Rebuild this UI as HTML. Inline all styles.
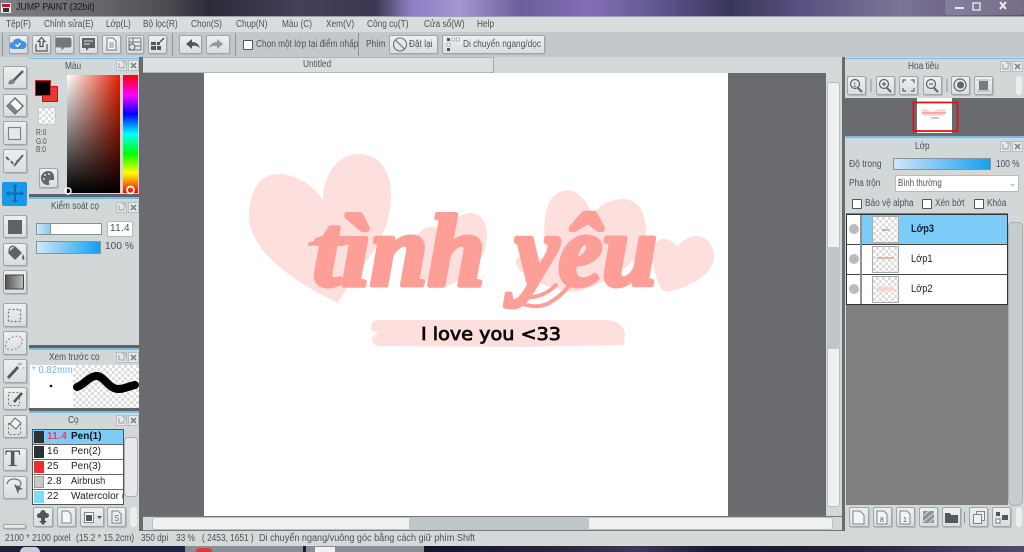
<!DOCTYPE html>
<html><head><meta charset="utf-8"><title>JUMP PAINT</title>
<style>
html,body{margin:0;padding:0;width:1024px;height:552px;overflow:hidden;background:#d4d9da}
body{position:relative;font-family:"Liberation Sans","DejaVu Sans",sans-serif;font-size:10px;color:#4c5154}
.r,.t,.b{position:absolute;box-sizing:border-box}
.t{white-space:nowrap;line-height:12px;transform:scaleX(.83);transform-origin:0 50%}
.t.n{transform:none}
.b{background:linear-gradient(#eef0f0,#d9dddf);border:1px solid #9fa6a9;border-radius:2px;box-shadow:1px 1px 0 #b4babc}
.ck{position:absolute;box-sizing:border-box;width:10px;height:10px;background:#fff;border:1px solid #555;border-radius:1px}
.chs{background:repeating-conic-gradient(#dedede 0 25%,#fff 0 50%) 0 0/6px 6px}
.grad{background:linear-gradient(90deg,#cfe7f8,#14a0ee);border:1px solid #8a9296}
svg{position:absolute;left:0;top:0}
</style></head><body>

<!-- title bar -->
<div class="r" style="left:0;top:0;width:1024px;height:16px;background:linear-gradient(90deg,#7d7f82 0,#66676b 100px,#4a4a50 170px,#2c2a38 210px,#45405a 300px,#3a3850 375px,#8d7cc0 410px,#a596d2 460px,#6d5d9c 520px,#8270b4 590px,#5f5590 660px,#39375a 730px,#595080 800px,#7d7598 900px,#59506c 1024px)"></div>
<div class="r" style="left:945px;top:0;width:79px;height:15px;background:rgba(215,215,235,.22);border-radius:0 0 3px 3px"></div>
<div class="t" style="left:16px;top:2px;color:#17171a;transform:scaleX(.88)">JUMP PAINT (32bit)</div>

<!-- menu -->
<div class="r" style="left:0;top:16px;width:1024px;height:16px;background:#d8dcdd;border-top:1px solid #9d9eb0"></div>
<div class="t" style="left:6px;top:19px">Tệp(F)</div>
<div class="t" style="left:44px;top:19px">Chỉnh sửa(E)</div>
<div class="t" style="left:106px;top:19px">Lớp(L)</div>
<div class="t" style="left:143px;top:19px">Bộ lọc(R)</div>
<div class="t" style="left:191px;top:19px">Chọn(S)</div>
<div class="t" style="left:236px;top:19px">Chụp(N)</div>
<div class="t" style="left:282px;top:19px">Màu (C)</div>
<div class="t" style="left:326px;top:19px">Xem(V)</div>
<div class="t" style="left:367px;top:19px">Công cụ(T)</div>
<div class="t" style="left:424px;top:19px">Cửa sổ(W)</div>
<div class="t" style="left:477px;top:19px">Help</div>

<!-- toolbar -->
<div class="r" style="left:0;top:32px;width:1024px;height:25px;background:#c3c9cb"></div>
<div class="r" style="left:2px;top:33px;width:1px;height:23px;background:#8f9698"></div>
<div class="r" style="left:172px;top:33px;width:1px;height:23px;background:#8f9698"></div>
<div class="r" style="left:235px;top:33px;width:1px;height:23px;background:#8f9698"></div>
<div class="r" style="left:358px;top:33px;width:1px;height:23px;background:#8f9698"></div>
<div class="b" style="left:9px;top:35px;width:19px;height:19px"></div>
<div class="b" style="left:32px;top:35px;width:19px;height:19px"></div>
<div class="b" style="left:55px;top:35px;width:19px;height:19px"></div>
<div class="b" style="left:79px;top:35px;width:19px;height:19px"></div>
<div class="b" style="left:102px;top:35px;width:19px;height:19px"></div>
<div class="b" style="left:126px;top:35px;width:18px;height:19px"></div>
<div class="b" style="left:148px;top:35px;width:19px;height:19px"></div>
<div class="b" style="left:179px;top:35px;width:23px;height:19px"></div>
<div class="b" style="left:206px;top:35px;width:24px;height:19px"></div>
<div class="ck" style="left:243px;top:40px"></div>
<div class="t" style="left:256px;top:39px">Chọn một lớp tại điểm nhấp</div>
<div class="t" style="left:366px;top:39px">Phím</div>
<div class="b" style="left:389px;top:35px;width:49px;height:19px"></div>
<div class="t" style="left:409px;top:39px">Đặt lại</div>
<div class="b" style="left:442px;top:35px;width:103px;height:19px"></div>
<div class="t" style="left:463px;top:39px">Di chuyển ngang/dọc</div>

<!-- tab row -->
<div class="r" style="left:143px;top:57px;width:699px;height:16px;background:#d3d8d9"></div>
<div class="r" style="left:143px;top:57px;width:351px;height:16px;background:#dbdfe0;border-right:1px solid #a5abae;border-top:1px solid #aeb4b6;border-bottom:1px solid #b0b6b8"></div>
<div class="t" style="left:303px;top:59px">Untitled</div>

<!-- canvas -->
<div class="r" style="left:143px;top:73px;width:683px;height:443px;background:#696b6e"></div>
<div class="r" style="left:204px;top:73px;width:524px;height:443px;background:#fff"></div>
<div class="r" style="left:826px;top:73px;width:16px;height:443px;background:#d3d8d9"></div>
<div class="r" style="left:827px;top:82px;width:13px;height:425px;background:#eff0f0;border:1px solid #b9bec0;border-radius:3px"></div>
<div class="r" style="left:827px;top:247px;width:13px;height:102px;background:#bfc6ca;border-radius:3px"></div>
<div class="r" style="left:143px;top:516px;width:699px;height:15px;background:#d3d8d9;border-top:1px solid #77797b;border-bottom:1px solid #77797b"></div>
<div class="r" style="left:152px;top:517px;width:681px;height:13px;background:#eff0f0;border:1px solid #b9bec0;border-radius:3px"></div>
<div class="r" style="left:409px;top:517px;width:180px;height:13px;background:#bfc6ca;border-radius:3px"></div>

<!-- side separators -->
<div class="r" style="left:139px;top:57px;width:4px;height:474px;background:#696b6e"></div>
<div class="r" style="left:842px;top:57px;width:3px;height:474px;background:#696b6e"></div>

<!-- left tools -->
<div class="r" style="left:0;top:57px;width:29px;height:474px;background:#d0d5d6"></div>
<div class="b" style="left:3px;top:66px;width:24px;height:23px"></div>
<div class="b" style="left:3px;top:94px;width:24px;height:23px"></div>
<div class="b" style="left:3px;top:121px;width:24px;height:24px"></div>
<div class="b" style="left:3px;top:149px;width:24px;height:24px"></div>
<div class="r" style="left:2px;top:182px;width:25px;height:24px;background:#1798ea;border-radius:2px"></div>
<div class="b" style="left:3px;top:215px;width:24px;height:23px"></div>
<div class="b" style="left:3px;top:243px;width:24px;height:23px"></div>
<div class="b" style="left:3px;top:270px;width:24px;height:24px"></div>
<div class="b" style="left:3px;top:303px;width:24px;height:24px"></div>
<div class="b" style="left:3px;top:331px;width:24px;height:24px"></div>
<div class="b" style="left:3px;top:359px;width:24px;height:24px"></div>
<div class="b" style="left:3px;top:387px;width:24px;height:23px"></div>
<div class="b" style="left:3px;top:415px;width:24px;height:23px"></div>
<div class="b" style="left:3px;top:448px;width:24px;height:23px"></div>
<div class="b" style="left:3px;top:476px;width:24px;height:23px"></div>
<div class="b" style="left:3px;top:524px;width:23px;height:5px"></div>
<div class="t n" style="left:5px;top:447px;font:bold 23px/24px 'Liberation Serif',serif;color:#55595c">T</div>

<!-- left panels -->
<div class="r" style="left:29px;top:57px;width:110px;height:474px;background:#d2d7d8"></div>
<div class="r" style="left:29px;top:58px;width:110px;height:1px;background:#74bfe4"></div>
<div class="t" style="left:65px;top:61px">Màu</div>
<div class="r" style="left:35px;top:80px;width:16px;height:16px;background:#000;border:1px solid #e01818;z-index:2"></div>
<div class="r" style="left:42px;top:86px;width:16px;height:16px;background:#e83a3a;border:1px solid #c01010"></div>
<div class="r chs" style="left:38px;top:107px;width:18px;height:18px;border:1px solid #c8c8c8"></div>
<div class="t" style="left:36px;top:129px;font-size:8px;line-height:8.5px;white-space:pre">R:0
G:0
B:0</div>
<div class="r" style="left:67px;top:75px;width:53px;height:118px;background:linear-gradient(transparent,#000),linear-gradient(90deg,#fff,#e62000)"></div>
<div class="r" style="left:123px;top:75px;width:15px;height:118px;background:linear-gradient(#f00,#f0f 17%,#00f 33%,#0ff 50%,#0f0 67%,#ff0 83%,#f00)"></div>
<div class="b" style="left:39px;top:168px;width:19px;height:20px"></div>
<div class="r" style="left:29px;top:194px;width:110px;height:3px;background:#5f6164"></div>
<div class="r" style="left:29px;top:197px;width:110px;height:2px;background:#74bfe4"></div>

<div class="t" style="left:51px;top:201px">Kiểm soát cọ</div>
<div class="r" style="left:36px;top:223px;width:66px;height:12px;background:#fff;border:1px solid #8a9296"></div>
<div class="r" style="left:37px;top:224px;width:14px;height:10px;background:linear-gradient(90deg,#d0e8f8,#8cc8ef);border-right:1px solid #8a9296"></div>
<div class="r" style="left:107px;top:221px;width:26px;height:16px;background:#fff;border:1px solid #b5babc;border-radius:2px"></div>
<div class="t n" style="left:110px;top:223px;letter-spacing:.3px">11.4</div>
<div class="r grad" style="left:36px;top:241px;width:65px;height:13px"></div>
<div class="t n" style="left:105px;top:241px;letter-spacing:.1px">100 %</div>
<div class="r" style="left:29px;top:345px;width:110px;height:3px;background:#5f6164"></div>
<div class="r" style="left:29px;top:348px;width:110px;height:2px;background:#74bfe4"></div>

<div class="t" style="left:49px;top:352px">Xem trước cọ</div>
<div class="r chs" style="left:73px;top:365px;width:66px;height:43px"></div>
<div class="r" style="left:30px;top:365px;width:43px;height:43px;background:#fff"></div>
<div class="t" style="left:32px;top:365px;color:#68b4de;letter-spacing:.2px;transform:scaleX(.92)">* 0.82mm</div>
<div class="r" style="left:29px;top:408px;width:110px;height:3px;background:#5f6164"></div>
<div class="r" style="left:29px;top:411px;width:110px;height:2px;background:#74bfe4"></div>

<div class="t" style="left:68px;top:415px">Cọ</div>
<div class="r" style="left:32px;top:429px;width:92px;height:76px;background:#fff;border:1px solid #555"></div>
<div class="r" style="left:33px;top:430px;width:90px;height:14px;background:#7dcbf7"></div>
<div class="r" style="left:33px;top:444px;width:90px;height:1px;background:#666"></div>
<div class="r" style="left:33px;top:459px;width:90px;height:1px;background:#666"></div>
<div class="r" style="left:33px;top:474px;width:90px;height:1px;background:#666"></div>
<div class="r" style="left:33px;top:489px;width:90px;height:1px;background:#666"></div>
<div class="r" style="left:34px;top:431px;width:10px;height:12px;background:#2e3133"></div>
<div class="r" style="left:34px;top:446px;width:10px;height:12px;background:#2e3133"></div>
<div class="r" style="left:34px;top:461px;width:10px;height:12px;background:#ee2e2e"></div>
<div class="r" style="left:34px;top:476px;width:10px;height:12px;background:#c9c9c9;border:1px solid #999"></div>
<div class="r" style="left:34px;top:491px;width:10px;height:12px;background:#7fdcf8"></div>
<div class="t n" style="left:47px;top:431px;font-weight:bold;color:#e8405e;letter-spacing:.3px">11.4</div>
<div class="t n" style="left:71px;top:431px;font-weight:bold;color:#111">Pen(1)</div>
<div class="t n" style="left:47px;top:446px;color:#222;letter-spacing:.3px">16</div>
<div class="t n" style="left:71px;top:446px;color:#222">Pen(2)</div>
<div class="t n" style="left:47px;top:461px;color:#222;letter-spacing:.3px">25</div>
<div class="t n" style="left:71px;top:461px;color:#222">Pen(3)</div>
<div class="t n" style="left:47px;top:476px;color:#222;letter-spacing:.3px">2.8</div>
<div class="t" style="left:71px;top:476px;color:#222;transform:scaleX(.92)">Airbrush</div>
<div class="r" style="left:71px;top:491px;width:52px;height:13px;overflow:hidden"><div class="t n" style="left:0;top:0;color:#222">Watercolor (1)</div></div>
<div class="t n" style="left:47px;top:491px;color:#222;letter-spacing:.3px">22</div>
<div class="r" style="left:124px;top:437px;width:14px;height:60px;background:#e6e8e9;border:1px solid #a9afb2;border-radius:4px"></div>
<div class="b" style="left:33px;top:507px;width:20px;height:20px"></div>
<div class="b" style="left:57px;top:507px;width:19px;height:20px"></div>
<div class="b" style="left:80px;top:507px;width:24px;height:20px"></div>
<div class="b" style="left:107px;top:507px;width:19px;height:20px"></div>
<div class="r" style="left:130px;top:507px;width:7px;height:20px;background:#eceeee;border-radius:3px"></div>

<!-- right panels -->
<div class="r" style="left:845px;top:57px;width:179px;height:474px;background:#d2d7d8"></div>
<div class="r" style="left:845px;top:58px;width:179px;height:1px;background:#74bfe4"></div>
<div class="t" style="left:908px;top:61px">Hoa tiêu</div>
<div class="b" style="left:847px;top:76px;width:19px;height:19px"></div>
<div class="b" style="left:876px;top:76px;width:19px;height:19px"></div>
<div class="b" style="left:899px;top:76px;width:19px;height:19px"></div>
<div class="b" style="left:923px;top:76px;width:19px;height:19px"></div>
<div class="b" style="left:951px;top:76px;width:19px;height:19px"></div>
<div class="b" style="left:974px;top:76px;width:19px;height:19px"></div>
<div class="r" style="left:1016px;top:76px;width:6px;height:19px;background:#eceeee;border-radius:3px"></div>
<div class="r" style="left:845px;top:98px;width:179px;height:38px;background:#696b6e"></div>
<div class="r" style="left:917px;top:98px;width:35px;height:35px;background:#fff"></div>
<div class="r" style="left:845px;top:136px;width:179px;height:2px;background:#74bfe4"></div>
<div class="t" style="left:915px;top:141px">Lớp</div>
<div class="t" style="left:849px;top:159px;transform:scaleX(.85)">Độ trong</div>
<div class="r grad" style="left:893px;top:158px;width:98px;height:12px"></div>
<div class="t" style="left:996px;top:159px">100 %</div>
<div class="t" style="left:849px;top:178px">Pha trộn</div>
<div class="r" style="left:895px;top:175px;width:124px;height:17px;background:#fff;border:1px solid #b5babc;border-radius:2px"></div>
<div class="t" style="left:898px;top:178px;transform:scaleX(.78)">Bình thường</div>
<div class="ck" style="left:852px;top:199px"></div>
<div class="t" style="left:865px;top:198px">Bảo vệ alpha</div>
<div class="ck" style="left:922px;top:199px"></div>
<div class="t" style="left:935px;top:198px">Xén bớt</div>
<div class="ck" style="left:974px;top:199px"></div>
<div class="t" style="left:987px;top:198px">Khóa</div>
<div class="r" style="left:846px;top:213px;width:162px;height:292px;background:#7f7f7f"></div>
<div class="r" style="left:846px;top:214px;width:162px;height:91px;background:#fff;border:1px solid #333"></div>
<div class="r" style="left:861px;top:215px;width:146px;height:29px;background:#7dcbf7"></div>
<div class="r" style="left:847px;top:244px;width:160px;height:1px;background:#444"></div>
<div class="r" style="left:847px;top:274px;width:160px;height:1px;background:#444"></div>
<div class="r" style="left:860px;top:215px;width:2px;height:89px;background:#8c9295"></div>
<div class="r" style="left:849px;top:224px;width:10px;height:10px;border-radius:50%;background:#b9bcbd"></div>
<div class="r" style="left:849px;top:254px;width:10px;height:10px;border-radius:50%;background:#b9bcbd"></div>
<div class="r" style="left:849px;top:284px;width:10px;height:10px;border-radius:50%;background:#b9bcbd"></div>
<div class="r chs" style="left:872px;top:216px;width:27px;height:27px;border:1px solid #aaa"></div>
<div class="r chs" style="left:872px;top:246px;width:27px;height:27px;border:1px solid #aaa"></div>
<div class="r chs" style="left:872px;top:276px;width:27px;height:27px;border:1px solid #aaa"></div>
<div class="t" style="left:911px;top:223px;font-size:11px;font-weight:bold;color:#10233a;transform:scaleX(.84)">Lớp3</div>
<div class="t" style="left:911px;top:253px;font-size:11px;color:#222;transform:scaleX(.84)">Lớp1</div>
<div class="t" style="left:911px;top:283px;font-size:11px;color:#222;transform:scaleX(.84)">Lớp2</div>
<div class="r" style="left:1008px;top:222px;width:15px;height:284px;background:#c6cbcd;border:1px solid #aab0b2;border-radius:4px 4px 6px 6px"></div>
<div class="b" style="left:849px;top:507px;width:20px;height:20px"></div>
<div class="b" style="left:873px;top:507px;width:19px;height:20px"></div>
<div class="b" style="left:896px;top:507px;width:19px;height:20px"></div>
<div class="b" style="left:919px;top:507px;width:19px;height:20px"></div>
<div class="b" style="left:942px;top:507px;width:19px;height:20px"></div>
<div class="r" style="left:964px;top:512px;width:1px;height:11px;background:#8f9698"></div>
<div class="b" style="left:969px;top:507px;width:19px;height:20px"></div>
<div class="b" style="left:992px;top:507px;width:19px;height:20px"></div>
<div class="r" style="left:1016px;top:507px;width:6px;height:20px;background:#eceeee;border-radius:3px"></div>

<!-- status -->
<div class="r" style="left:0;top:531px;width:1024px;height:15px;background:#d4d9da"></div>
<div class="t" style="left:5px;top:533px;transform:scaleX(.85)">2100 * 2100 pixel</div>
<div class="t" style="left:76px;top:533px;transform:scaleX(.85)">(15.2 * 15.2cm)</div>
<div class="t" style="left:141px;top:533px">350 dpi</div>
<div class="t" style="left:176px;top:533px">33 %</div>
<div class="t" style="left:202px;top:533px">( 2453, 1651 )</div>
<div class="t" style="left:259px;top:533px;transform:scaleX(.908)">Di chuyển ngang/vuông góc bằng cách giữ phím Shift</div>

<!-- taskbar -->
<div class="r" style="left:0;top:546px;width:1024px;height:6px;background:linear-gradient(90deg,#1c2038 0,#1e2244 180px,#14142c 430px,#2a2440 560px,#3c3658 640px,#181830 720px,#241f3c 850px,#524a70 1024px)"></div>
<div class="r" style="left:185px;top:546px;width:118px;height:6px;background:#8c8c94"></div>
<div class="r" style="left:306px;top:546px;width:118px;height:6px;background:#8c8c94"></div>
<div class="r" style="left:196px;top:548px;width:16px;height:4px;background:#d83a3a;border-radius:8px 8px 0 0"></div>
<div class="r" style="left:315px;top:547px;width:20px;height:5px;background:#f2f2f2"></div>
<div class="r" style="left:20px;top:547px;width:20px;height:5px;background:#c9ced6;border-radius:8px 8px 0 0"></div>

<!-- vector overlay -->
<svg width="1024" height="552" viewBox="0 0 1024 552">
<!-- app icon -->
<rect x="1" y="3" width="10" height="10" fill="#e8e8e8"/><rect x="2" y="4" width="8" height="3" fill="#c01820"/><rect x="3" y="8" width="6" height="4" fill="#333"/>
<!-- window controls -->
<rect x="955" y="7" width="9" height="2" fill="#e8e8f0"/>
<rect x="973" y="3" width="7" height="7" fill="none" stroke="#eee" stroke-width="1.3"/>
<path d="M1000 2l6 7M1006 2l-6 7" stroke="#eee" stroke-width="2"/>

<!-- toolbar icons -->
<path d="M13 49a3.500 3.500 0 0 1 0-7 5 5 0 0 1 9-1 4 4 0 0 1 1 8z" fill="#3f94dc"/><path d="M15.500 44.500l2 2 3-3.500" fill="none" stroke="#fff" stroke-width="1.400"/>
<path d="M41.500 37.500l-3.500 4h2v5h3v-5h2zM36 44v7h11v-7" fill="none" stroke="#555" stroke-width="1.200"/>
<path d="M58 38h12q2 0 2 2v6q0 2-2 2h-5l-3 3v-3h-4q-2 0-2-2v-6q0-2 2-2z" transform="translate(-.5 -.500)" fill="#74787a"/>
<path d="M82 38h13v10h-6l-3 3v-3h-4z" fill="#5e6265"/><path d="M84 41h9M84 44h6" stroke="#ddd"/>
<path d="M107 38h6l3 3v9h-9z" fill="#f6f6f6" stroke="#777"/><path d="M109 43h5M109 45h5M109 47h5" stroke="#888"/>
<path d="M129 38h12v12h-12zM129 42h12M129 46h12M133 38v12" fill="none" stroke="#70767a"/><circle cx="132" cy="47" r="3" fill="#ddd" stroke="#666"/>
<path d="M151 42h5v3h-5zM157 42h3v3h-3zM151 46h5v4h-5zM157 46h4v4h-4z" fill="#555"/><path d="M160 42l4-4" stroke="#555" stroke-width="1.500"/>
<path d="M186 44l6-5v3q6 0 8 6-3-3-8-2v3z" fill="#555"/>
<path d="M223 44l-6-5v3q-6 0-8 6 3-3 8-2v3z" fill="#93989b"/>
<circle cx="400" cy="44.500" r="6.500" fill="none" stroke="#6b7073" stroke-width="1.100"/><path d="M395.500 40l9 9" stroke="#6b7073" stroke-width="1.100"/>
<path d="M447 38h3v3h-3zM447 48h3v3h-3z" fill="#555"/><path d="M452 38h3v3h-3zM456.500 38h3v3h-3zM447 43h3v3h-3z" fill="#fff" stroke="#888" stroke-width=".6"/>

<!-- panel title icons -->
<g fill="#e6e9ea" stroke="#b8bdbf"><rect x="116.500" y="60.500" width="10" height="10"/><rect x="128.500" y="60.500" width="10" height="10"/><rect x="116.500" y="202.500" width="10" height="10"/><rect x="128.500" y="202.500" width="10" height="10"/><rect x="116.500" y="352.500" width="10" height="10"/><rect x="128.500" y="352.500" width="10" height="10"/><rect x="116.500" y="415.500" width="10" height="10"/><rect x="128.500" y="415.500" width="10" height="10"/>
<rect x="1000.500" y="61.500" width="10" height="10"/><rect x="1012.500" y="61.500" width="10" height="10"/><rect x="1000.500" y="141.500" width="10" height="10"/><rect x="1012.500" y="141.500" width="10" height="10"/></g>
<g stroke="#808487" stroke-width="1.600"><path d="M131 63l5 5M136 63l-5 5M131 205l5 5M136 205l-5 5M131 355l5 5M136 355l-5 5M131 418l5 5M136 418l-5 5M1015 64l5 5M1020 64l-5 5M1015 144l5 5M1020 144l-5 5"/></g>
<g fill="none" stroke="#9a9fa2"><path d="M119 63v5h5v-3M122 62h3v3M119 205v5h5v-3M122 204h3v3M119 355v5h5v-3M122 354h3v3M119 418v5h5v-3M122 417h3v3M1003 64v5h5v-3M1006 63h3v3M1003 144v5h5v-3M1006 143h3v3"/></g>

<!-- left tool icons -->
<path d="M23 71L13 81" stroke="#5a5e61" stroke-width="2.500"/><path d="M8 84q1-5 5-4.500l2 2q-1 4-7 2.500z" fill="#808487"/>
<path d="M15 98l8 8-8 8-8-8z" fill="#fff" stroke="#5f6366" stroke-width="1.300"/><path d="M10 103l-3 3 8 8 3-3z" fill="#808487"/>
<rect x="8.500" y="127.500" width="12" height="12" fill="#e6e8e9" stroke="#808487" stroke-width="1.200"/>
<path d="M6 157l3 3M11 161l2 3M17 162l1-2" stroke="#5f6366" stroke-width="2"/><path d="M14 166l9-11" stroke="#5f6366" stroke-width="2"/>
<path d="M15 185v17M6.500 193.500h17" stroke="#0e6cb0" stroke-width="2"/><path d="M15 184l-3 3h6zM15 203l-3-3h6zM6 193.500l3-3v6zM24 193.500l-3-3v6z" fill="#0e6cb0"/>
<rect x="8" y="220" width="14" height="14" fill="#5f6366"/>
<path d="M8 253l7-7 7 7-6 6q-1 1-2 0z" fill="#5f6366"/><path d="M9 252q0-6 5-6" fill="none" stroke="#5f6366" stroke-width="1.300"/><path d="M23 254q2 4 1 6-2 0-2-3z" fill="#5f6366"/>
<defs><linearGradient id="g1" x1="0" x2="1"><stop offset="0" stop-color="#555"/><stop offset="1" stop-color="#bbb"/></linearGradient></defs>
<rect x="5.500" y="275" width="18" height="14" fill="url(#g1)" stroke="#444"/>
<rect x="8.500" y="309.500" width="12" height="12" fill="none" stroke="#70757a" stroke-width="1.300" stroke-dasharray="2 2"/>
<ellipse cx="14" cy="343" rx="9" ry="6" transform="rotate(-28 14 343)" fill="none" stroke="#999" stroke-width="1.300" stroke-dasharray="2 2"/>
<path d="M8 378l10-11" stroke="#55595c" stroke-width="3"/><path d="M20 362v4M17 364h6M22 368h3" stroke="#aaa"/>
<rect x="8.500" y="392.500" width="11" height="13" fill="none" stroke="#70757a" stroke-dasharray="2 2"/><path d="M14 402l8-9" stroke="#555" stroke-width="2.500"/>
<rect x="8.500" y="423.500" width="12" height="11" fill="none" stroke="#70757a" stroke-dasharray="2 2"/><path d="M15 418l6 5-5 6-6-5z" fill="#f4f4f4" stroke="#666"/>
<path d="M7 484q1-5 7-5t7 4q0 4-5 4" fill="none" stroke="#777" stroke-width="1.200"/><path d="M14 484l9 5-4 1-1 4z" fill="#5f6366"/>

<!-- colour panel small -->
<circle cx="68" cy="191" r="3" fill="none" stroke="#fff" stroke-width="1.500"/>
<circle cx="130.500" cy="190" r="3.500" fill="none" stroke="#fff" stroke-width="1.800"/>
<path d="M48 171a7 7 0 1 0 0 14q2 0 1-2-1-3 2-3h3q1-9-6-9z" fill="#60666a"/><circle cx="45" cy="175" r="1" fill="#ddd"/><circle cx="49" cy="174" r="1" fill="#ddd"/><circle cx="44" cy="179" r="1" fill="#ddd"/>

<!-- brush preview -->
<circle cx="51" cy="386" r="1.300" fill="#111"/>
<path d="M77 387c8-3 12-11 20-11 7 0 12 13 21 13 7 0 11-3 17-4" fill="none" stroke="#000" stroke-width="8" stroke-linecap="round"/>

<!-- brush buttons -->
<path d="M37 516q0-3 3-3 1-3 3-3t3 3q3 0 3 3-1 2-3 2h-6q-3 0-3-2zM41 518h4v3h2l-4 4-4-4h2z" fill="#555"/>
<path d="M62 511h6l3 3v9h-9z" fill="#f6f6f6" stroke="#808487"/>
<rect x="84.500" y="512.500" width="9" height="10" fill="#fff" stroke="#808487"/><rect x="86" y="515" width="6" height="6" fill="#555"/><path d="M97 516h5l-2.500 3z" fill="#555"/>
<path d="M112 511h6l3 3v9h-9z" fill="#efefef" stroke="#808487"/><text x="114" y="521" font-family="Liberation Sans" font-size="8" fill="#666">S</text>

<!-- navigator icons -->
<g fill="none" stroke="#5f6366" stroke-width="1.200">
<circle cx="855" cy="84" r="4.500"/><path d="M858 88l4 4" stroke-width="2"/>
<circle cx="884" cy="84" r="4.500"/><path d="M887 88l4 4" stroke-width="2"/><path d="M882 84h4M884 82v4"/>
<path d="M903 83v-3h3M914 83v-3h-3M903 88v3h3M914 88v3h-3"/>
<circle cx="931" cy="84" r="4.500"/><path d="M934 88l4 4" stroke-width="2"/><path d="M929 84h4"/>
<circle cx="960" cy="85" r="6"/></g>
<text x="853" y="87" font-family="Liberation Sans" font-size="6.500" fill="#555">1</text>
<circle cx="960.500" cy="85" r="3.500" fill="#5f6366"/>
<rect x="979" y="81" width="9" height="9" fill="#787d80"/><path d="M977 80h13M977 91h13" stroke="#aaa"/>
<path d="M871 79v13M947 79v13" stroke="#8f9698"/>
<!-- navigator thumb -->
<path d="M921 110q6-3 8 1 3 3 7-1 6-2 10 0 0 4-4 6h-18q-3-2-3-6z" fill="#fbd8d5"/><path d="M922 113h24" stroke="#f08f87" stroke-width="1.200"/><path d="M931 118h8" stroke="#999"/>
<rect x="913.500" y="102.500" width="44" height="28.500" fill="none" stroke="#d8141c" stroke-width="1.800"/>
<!-- layers thumbs -->
<path d="M882 230h7" stroke="#888"/><path d="M877 258h17" stroke="#f39a92" stroke-width="1.500"/><path d="M877 289h17" stroke="#fcd5d2" stroke-width="4"/>
<path d="M1010 184l5 0-2.500 3z" fill="#ccc"/>
<!-- layer buttons -->
<g fill="#f4f4f4" stroke="#808487"><path d="M853 511h7l4 4v9h-11zM877 511h7l3 3v10h-10zM900 511h7l3 3v10h-10z"/></g>
<rect x="923" y="511" width="11" height="12" fill="#8f9395"/><path d="M923 516l6-5M923 522l11-9M929 523l5-5" stroke="#ddd"/>
<path d="M945 513h5l1 2h7v8h-13z" fill="#55595c"/>
<g fill="#f0f0f0" stroke="#808487"><rect x="976.500" y="511.500" width="8" height="9"/><rect x="973.500" y="514.500" width="8" height="9"/></g>
<rect x="996" y="512" width="4" height="4" fill="#555"/><rect x="996" y="519" width="4" height="4" fill="#fff" stroke="#777"/><rect x="1002" y="515" width="6" height="5" fill="#555"/>
<text x="880" y="522" font-family="Liberation Sans" font-size="7" fill="#555">8</text><text x="903" y="522" font-family="Liberation Sans" font-size="7" fill="#555">1</text>

<!-- artwork -->
<g fill="#fddfdd">
<path d="M323 200C312 184 295 174 278 174C258 174 249 195 249 215C249 250 290 280 338 303C348 285 353 281 362 268C378 245 391 225 391 195C391 170 378 154 360 154C338 154 323 175 323 200Z"/>
<path d="M413 260C410 240 420 226 432 227C440 227 444 232 447 236C452 218 466 210 476 214C488 218 489 240 484 252C476 270 460 282 445 287C430 286 416 280 413 260Z"/>
<path d="M592 215C600 204 612 199 624 199C640 200 646 215 646 232C646 255 620 280 575 292C560 290 535 285 520 270C512 262 516 255 525 256C535 256 548 260 548 260C544 240 542 225 548 205C553 192 568 186 578 194C586 200 590 208 592 215Z"/>
<path d="M677 247C682 240 690 236 697 236C708 237 714 246 714 257C713 275 690 287 667 292C658 290 656 275 653 265C650 250 655 239 663 239C670 239 675 243 677 247Z"/>
<path d="M376 320L606 320Q622 321 625 333L624 345L520 347L378 346Q371 343 372 337L378 333L371 330Q371 322 376 320Z"/>
</g>
<g fill="#fe9f97" stroke="#fe9f97" stroke-width="5" stroke-linejoin="round" font-family="Liberation Serif" font-weight="bold" font-style="italic" font-size="102">
<text x="313" y="285" textLength="172" lengthAdjust="spacingAndGlyphs">tình</text>
<text x="515" y="285" textLength="142" lengthAdjust="spacingAndGlyphs">yêu</text>
</g>
<path d="M310 244q20-5 48 0" fill="none" stroke="#fe9f97" stroke-width="4" stroke-linecap="round"/>
<path d="M556 285q-14 14-32 12-6-3-1 7 14 5 26-1 14-8 22-20" fill="none" stroke="#fe9f97" stroke-width="4" stroke-linecap="round"/>
<text x="421" y="340" textLength="140" lengthAdjust="spacingAndGlyphs" font-family="DejaVu Sans" font-size="18" fill="#0a0a0a" stroke="#0a0a0a" stroke-width=".8">I love you &lt;33</text>
</svg>
</body></html>
